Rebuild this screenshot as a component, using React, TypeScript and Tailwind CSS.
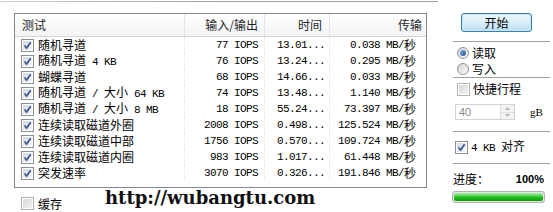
import React from 'react';

const rows = [
  { name: '随机寻道', io: '77 IOPS', time: '13.01...', rate: '0.038 MB/秒' },
  { name: '随机寻道 4 KB', io: '76 IOPS', time: '13.24...', rate: '0.295 MB/秒' },
  { name: '蝴蝶寻道', io: '68 IOPS', time: '14.66...', rate: '0.033 MB/秒' },
  { name: '随机寻道 / 大小 64 KB', io: '74 IOPS', time: '13.48...', rate: '1.140 MB/秒' },
  { name: '随机寻道 / 大小 8 MB', io: '18 IOPS', time: '55.24...', rate: '73.397 MB/秒' },
  { name: '连续读取磁道外圈', io: '2008 IOPS', time: '0.498...', rate: '125.524 MB/秒' },
  { name: '连续读取磁道中部', io: '1756 IOPS', time: '0.570...', rate: '109.724 MB/秒' },
  { name: '连续读取磁道内圈', io: '983 IOPS', time: '1.017...', rate: '61.448 MB/秒' },
  { name: '突发速率', io: '3070 IOPS', time: '0.326...', rate: '191.846 MB/秒' },
];

// CJK runs stay at 12px, latin runs get a half-width mono like SimSun
function Mix({ t }: { t: string }) {
  return (
    <>
      {t
        .split(/([\u4e00-\u9fff]+)/)
        .filter(Boolean)
        .map((s, i) =>
          /[\u4e00-\u9fff]/.test(s) ? (
            <span key={i}>{s}</span>
          ) : (
            <span key={i} className="font-['Liberation_Mono',monospace] text-[11px] tracking-[-0.6px] whitespace-pre">
              {s}
            </span>
          )
        )}
    </>
  );
}

function Check({ on, dim }: { on?: boolean; dim?: boolean }) {
  return (
    <span
      className={`relative inline-flex w-[13px] h-[13px] shrink-0 border ${
        dim ? 'border-[#b1b1b1]' : 'border-[#8e8f8f]'
      } bg-white p-px`}
    >
      <span className={`w-full h-full bg-gradient-to-br ${dim ? 'from-[#d8d8d8] to-[#f2f2f2]' : 'from-[#cfd6de] to-[#f6f8fa]'}`} />
      {on && (
        <svg className="absolute left-[1px] top-[1px]" width="9" height="9" viewBox="0 0 9 9">
          <path d="M1.5 4.5 L3.6 7 L7.6 1.2" fill="none" stroke="#3f5b93" strokeWidth="1.8" />
        </svg>
      )}
    </span>
  );
}

function Radio({ on }: { on?: boolean }) {
  return (
    <span className="inline-flex items-center justify-center w-[12px] h-[12px] rounded-full border border-[#929292] bg-gradient-to-br from-[#d4d4d4] to-[#fbfbfb]">
      {on && <span className="w-[6px] h-[6px] rounded-full bg-gradient-to-br from-[#7fb6e8] to-[#1c4f98]" />}
    </span>
  );
}

export default function App() {
  return (
    <div className="w-[553px] h-[212px] bg-white flex overflow-hidden relative text-[12px] leading-none text-black font-['Noto_Sans_CJK_SC',sans-serif]">
      {/* left - results list */}
      <div className="w-[438px] flex flex-col">
        <div className="mt-px h-px bg-gradient-to-r from-[#d0d0d0] via-[#a0a0a0] to-[#a0a0a0]" />
        <div className="ml-[14px] mt-[11px] w-[413px] h-[175px] border border-[#828790] flex flex-col">
          <div className="flex h-[23px] border-b border-[#d5d5d5] bg-gradient-to-b from-white to-[#f3f4f6] text-[#1e1e1e]">
            <div className="w-[170px] flex items-center pl-[7px] border-r border-[#e3e5e8]">测试</div>
            <div className="w-[80px] flex items-center justify-end pr-[6px] border-r border-[#e3e5e8]">输入/输出</div>
            <div className="w-[65px] flex items-center justify-end pr-[7px] border-r border-[#e3e5e8]">时间</div>
            <div className="w-[96px] flex items-center justify-end pr-[4px]">传输</div>
          </div>
          {rows.map((r) => (
            <div key={r.name} className="flex h-[16px]">
              <div className="w-[170px] flex items-center pl-[6px] border-r border-dotted border-[#e6e6e6]">
                <Check on />
                <span className="ml-[4px] whitespace-pre">
                  <Mix t={r.name} />
                </span>
              </div>
              <div className="w-[80px] flex items-center justify-end pr-[6px] border-r border-dotted border-[#e6e6e6]">
                <Mix t={r.io} />
              </div>
              <div className="w-[65px] flex items-center pl-[12px] border-r border-dotted border-[#e6e6e6]">
                <Mix t={r.time} />
              </div>
              <div className="w-[96px] flex items-center justify-end pr-[10px]">
                <Mix t={r.rate} />
              </div>
            </div>
          ))}
        </div>
        <div className="flex items-center mt-[9px] h-[13px] ml-[21px]">
          <Check dim />
          <span className="ml-[4px]">缓存</span>
        </div>
      </div>

      {/* watermark over the bottom edge */}
      <div className="absolute left-[105px] top-[189px] text-[18px] leading-[18px] font-bold font-['DejaVu_Serif',serif] text-[#111]">
        http://wubangtu.com
      </div>

      {/* right - controls */}
      <div className="flex-1 flex flex-col pl-[15px] pr-[3px]">
        <button className="mt-[13px] ml-[8px] w-[71px] h-[19px] rounded-[3px] border border-[#3c7fb1] bg-gradient-to-b from-[#eef7fd] via-[#dbeffa] to-[#b9def4] shadow-[inset_0_0_0_1px_#c4e5f6] flex items-center justify-center text-[12px]">
          开始
        </button>
        <div className="mt-[9px] h-px bg-[#a0a0a0]" />
        <div className="mt-[3px] h-[16px] flex items-center pl-[4px] gap-[3px]">
          <Radio on />
          <span>读取</span>
        </div>
        <div className="h-[16px] flex items-center pl-[4px] gap-[3px]">
          <Radio />
          <span>写入</span>
        </div>
        <div className="h-px bg-[#a0a0a0]" />
        <div className="mt-[3px] h-[16px] flex items-center pl-[4px] gap-[3px]">
          <Check dim />
          <span>快捷行程</span>
        </div>
        <div className="mt-[7px] h-[16px] flex items-center">
          <div className="ml-[2px] w-[60px] h-[16px] border border-[#d4d4d4] flex items-center">
            <span className="flex-1 pl-[3px] text-[11px] text-[#8a8a8a] font-['Liberation_Sans',sans-serif]">40</span>
            <span className="w-[14px] h-full flex flex-col border-l border-[#e0e0e0] bg-[#f3f3f3]">
              <span className="flex-1 flex items-center justify-center border-b border-[#e0e0e0]">
                <svg width="5" height="3" viewBox="0 0 5 3"><path d="M0 3 L2.5 0 L5 3Z" fill="#b0b0b0" /></svg>
              </span>
              <span className="flex-1 flex items-center justify-center">
                <svg width="5" height="3" viewBox="0 0 5 3"><path d="M0 0 L2.5 3 L5 0Z" fill="#b0b0b0" /></svg>
              </span>
            </span>
          </div>
          <span className="ml-[15px] text-[11px] font-['Liberation_Serif',serif]">gB</span>
        </div>
        <div className="mt-[11px] h-px bg-[#a0a0a0]" />
        <div className="mt-[7px] h-[16px] flex items-center pl-[2px] gap-[3px]">
          <Check on />
          <span className="whitespace-pre">
            <Mix t="4 KB 对齐" />
          </span>
        </div>
        <div className="mt-[8px] h-px bg-[#a0a0a0]" />
        <div className="mt-[7px] h-[16px] flex items-center justify-between pr-[6px]">
          <span>进度：</span>
          <span className="font-bold font-['Liberation_Sans',sans-serif] text-[11px]">100%</span>
        </div>
        <div className="mt-[4px] -ml-px w-[93px] h-[12px] rounded-[3px] border border-[#b2b2b2] p-px bg-[#e6e6e6]">
          <div className="w-full h-full rounded-[2px] bg-gradient-to-b from-[#a8eea8] via-[#1fc41f] to-[#0b9a0b]" />
        </div>
      </div>
    </div>
  );
}
